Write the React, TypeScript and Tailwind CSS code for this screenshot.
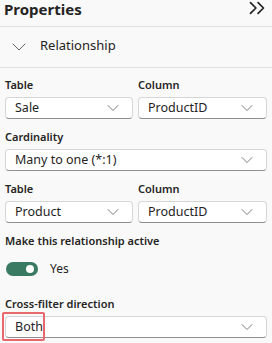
import { ChevronDown, ChevronsRight } from "lucide-react";

const Label = ({ children }: { children: React.ReactNode }) => (
  <div className="text-[11px] font-semibold leading-[14px] h-[14px] text-[#252423] mb-[5px]">{children}</div>
);

const Select = ({ value, className = "" }: { value: string; className?: string }) => (
  <div
    className={`flex items-center justify-between h-[22px] bg-white border border-[#d6d6d6] border-b-[#8f8f8f] rounded-[4px] pl-[9px] pr-[9px] ${className}`}
  >
    <span className="text-[12.5px] text-[#252423] leading-none">{value}</span>
    <ChevronDown size={20} strokeWidth={1.1} className="text-[#707070]" />
  </div>
);

export default function App() {
  return (
    <div
      className="w-[272px] h-[343px] bg-[#f9f9f9] overflow-hidden"
      style={{ fontFamily: '"Segoe UI", "Noto Sans", sans-serif' }}
    >
      <div className="flex items-center justify-between h-[27px] pl-[4px] pr-[2px] border-b border-[#e1e1e1]">
        <span className="text-[15px] font-bold text-[#252423] leading-none -mt-[8px]">Properties</span>
        <ChevronsRight size={26} strokeWidth={1.6} className="text-[#252423] -mt-[11px]" />
      </div>
      <div className="flex items-center h-[41px] pl-[7px] border-b border-[#e1e1e1] gap-[9px]">
        <ChevronDown size={24} strokeWidth={1} className="text-[#616161]" />
        <span className="text-[13px] text-[#252423] -mt-[2px]">Relationship</span>
      </div>

      <div className="px-[5px] pt-[10px]">
        <div className="flex gap-[5px]">
          <div className="w-[128px]">
            <Label>Table</Label>
            <Select value="Sale" />
          </div>
          <div className="w-[129px]">
            <Label>Column</Label>
            <Select value="ProductID" />
          </div>
        </div>

        <div className="mt-[11px]">
          <Label>Cardinality</Label>
          <Select value="Many to one (*:1)" className="w-[262px]" />
        </div>

        <div className="flex gap-[5px] mt-[11px]">
          <div className="w-[128px]">
            <Label>Table</Label>
            <Select value="Product" />
          </div>
          <div className="w-[129px]">
            <Label>Column</Label>
            <Select value="ProductID" />
          </div>
        </div>

        <div className="mt-[11px]">
          <div className="text-[11px] font-semibold leading-[14px] h-[14px] text-[#252423]">
            Make this relationship active
          </div>
          <div className="flex items-center gap-[12px] mt-[14px] pl-[1px]">
            <div className="w-[32px] h-[14px] rounded-full bg-[#3b7a62] flex items-center justify-end pr-[4px]">
              <div className="w-[8px] h-[8px] rounded-full bg-white" />
            </div>
            <span className="text-[12px] leading-[14px] text-[#252423]">Yes</span>
          </div>
        </div>

        <div className="mt-[21px]">
          <Label>Cross-filter direction</Label>
          <div className="relative">
            <Select value="Both" className="w-[262px]" />
            <div className="absolute left-[-3px] top-[-4px] w-[43px] h-[29px] border-2 border-[#e8686d] rounded-[2px]" />
          </div>
        </div>
      </div>
    </div>
  );
}
